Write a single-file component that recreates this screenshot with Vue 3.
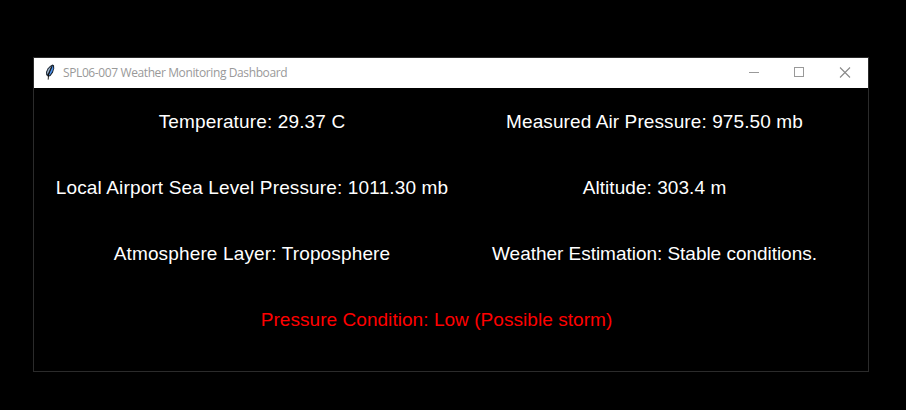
<script setup>
const readings = [
  { id: 'temperature', text: 'Temperature: 29.37 C' },
  { id: 'measured', text: 'Measured Air Pressure: 975.50 mb' },
  { id: 'sea-level', text: 'Local Airport Sea Level Pressure: 1011.30 mb' },
  { id: 'altitude', text: 'Altitude: 303.4 m' },
  { id: 'layer', text: 'Atmosphere Layer: Troposphere' },
  { id: 'estimation', text: 'Weather Estimation: Stable conditions.' },
  { id: 'condition', text: 'Pressure Condition: Low (Possible storm)' },
]
</script>

<template>
  <div class="desktop">
    <div class="window">
      <header class="titlebar">
        <svg class="feather" width="12" height="17" viewBox="0 0 12 17">
          <path d="M8.4 0.6 L10 1.2 L10.2 4.5 L9 8.5 L6.5 12 L4.2 12.8 L2.2 11 L2 8 L3.6 4.6 L6 2Z" fill="#1d2733" />
          <path d="M8.8 1.8 L9.3 4.4 L8 8 L5.8 11 L4.8 11.4 L6 7Z" fill="#4f93ee" />
          <path d="M7.4 2 L4.4 5 L3 8.2 L3.4 10.4 L5 7.5Z" fill="#9fb4cc" />
          <path d="M7.8 3 L4.6 10.5 L4.2 15.6" fill="none" stroke="#111" stroke-width="0.9" />
        </svg>
        <h1 class="title"><span>SPL06-007 Weather Monitoring Dashboard</span></h1>
        <svg class="controls" width="138" height="30" viewBox="0 0 138 30" fill="none" stroke="#999" shape-rendering="crispEdges">
          <path d="M19 14.5H29" />
          <rect x="64.5" y="9.5" width="9" height="9" />
          <path d="M110 9.5L120 19.5M120 9.5L110 19.5" shape-rendering="auto" stroke-width="1.1" stroke="#888" />
        </svg>
      </header>
      <main class="readings">
        <p v-for="r in readings" :key="r.id" class="reading" :class="r.id"><span>{{ r.text }}</span></p>
      </main>
    </div>
  </div>
</template>

<style>
body {
  background: #000;
}
</style>

<style scoped>
.desktop {
  box-sizing: border-box;
  height: 410px;
  padding: 57px 37px 38px 33px;
  background: #000;
}
.window {
  box-sizing: border-box;
  width: 836px;
  height: 315px;
  border: 1px solid #2b2b2b;
}
.titlebar {
  display: flex;
  align-items: center;
  height: 30px;
  background: #fff;
}
.feather {
  margin: 0 7px 2px 10px;
}
.title {
  flex: 1;
  margin: 0;
  font: 400 12px/16px "Open Sans", "Noto Sans", sans-serif;
  letter-spacing: -0.39px;
  color: #999;
  white-space: nowrap;
}
.readings {
  display: grid;
  grid-template-columns: 436px 369px;
  grid-auto-rows: 66px;
}
.reading {
  display: flex;
  align-items: center;
  justify-content: center;
  margin: 0;
  padding-top: 2px;
  color: #fff;
  font: 19px/22px "Liberation Sans", Arial, sans-serif;
  letter-spacing: 0.14px;
  white-space: nowrap;
}
.measured {
  letter-spacing: 0.1px;
}
.altitude {
  letter-spacing: 0.06px;
}
.estimation {
  letter-spacing: -0.03px;
}
.condition {
  grid-column: 1 / 3;
  color: #f00;
  letter-spacing: 0.05px;
}
</style>
